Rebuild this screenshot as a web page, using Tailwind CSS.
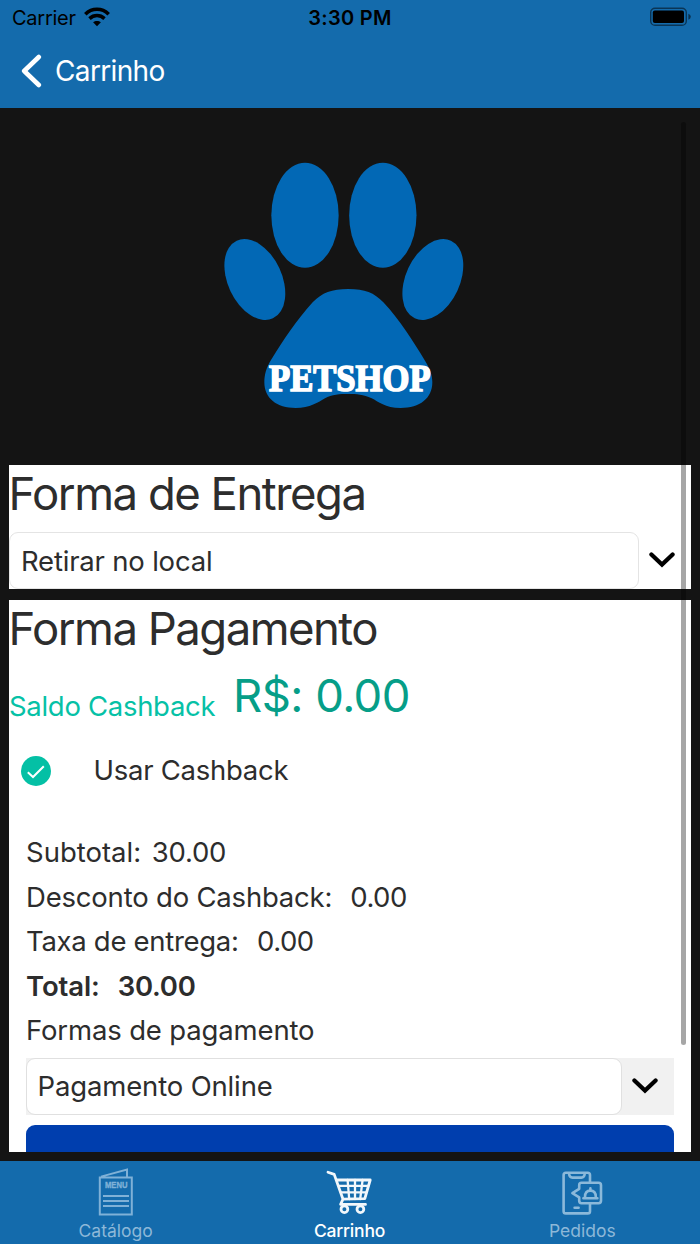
<!DOCTYPE html>
<html lang="pt-BR">
<head>
<meta charset="utf-8">
<title>Carrinho</title>
<script src="https://cdn.jsdelivr.net/npm/@tailwindcss/browser@4"></script>
</head>
<body class="font-['Inter',sans-serif] bg-[#141414] text-[#2d2d2d]">
<div class="relative w-[700px] h-[1244px] flex flex-col overflow-hidden whitespace-nowrap">

  <header class="h-[108px] shrink-0 bg-[#146bac]">
    <div class="h-9 grid grid-cols-3 items-center text-black text-[20px] pl-[12px] pr-[9px]">
      <div class="flex items-center gap-2">
        <span class="tracking-[-0.25px]">Carrier</span>
        <svg class="w-[26px] h-5 -mt-0.5" viewBox="0 0 26 20" fill="none" stroke="#000">
          <path d="M1.3 7.2C8 .6 18 .6 24.7 7.2" stroke-width="3.6"/>
          <path d="M5.5 11.6C9.8 7.6 16.2 7.6 20.5 11.6" stroke-width="3.5"/>
          <path d="M13 19.2L9.1 15.3C11.3 13.5 14.7 13.5 16.9 15.3Z" fill="#000" stroke="none"/>
        </svg>
      </div>
      <span class="text-center font-semibold tracking-[0.3px] -ml-[3px]">3:30 PM</span>
      <svg class="justify-self-end w-[41px] h-5 -mt-0.5" viewBox="0 0 41 20">
        <rect x=".7" y="1.2" width="35.6" height="17" rx="4.3" fill="none" stroke="#000" stroke-opacity=".5" stroke-width="1.4"/>
        <rect x="2.8" y="3.6" width="31.2" height="12.4" rx="2" fill="#000"/>
        <path d="M38.4 6.7Q40.8 7.7 40.8 9.7T38.4 12.7Z" fill="#000" fill-opacity=".55"/>
      </svg>
    </div>
    <div class="h-[70px] flex items-center text-white pl-[21px] gap-[13px]">
      <svg class="w-[21px] h-[34px]" viewBox="0 0 21 34" fill="none" stroke="#fff" stroke-width="4.6" stroke-linecap="round" stroke-linejoin="round"><path d="M17.8 3L3.2 17L17.8 31"/></svg>
      <span class="text-[28px] tracking-[-0.64px]">Carrinho</span>
    </div>
  </header>

  <main class="h-[1044px] shrink-0 px-[9px] overflow-hidden">
    <div class="h-[357px] pt-[42px] pl-[201px]">
      <svg class="w-[270px] h-[270px]" viewBox="0 0 810 810" fill="#0268b5">
        <ellipse cx="285" cy="196" rx="101" ry="157.5"/>
        <ellipse cx="518.5" cy="196" rx="101" ry="157.5"/>
        <ellipse cx="134.5" cy="388.5" rx="81" ry="128.6" transform="rotate(-25 134.5 388.5)"/>
        <ellipse cx="668.5" cy="388.5" rx="81" ry="128.6" transform="rotate(25 668.5 388.5)"/>
        <path d="M415 417C465 417 492 428 520 457C570 510 610 575 645 632C660 657 667 675 667 697C667 745 630 774 572 774C525 774 505 755 485 745C460 733 440 732 415 732C390 732 365 733 345 745C325 757 300 774 257 774C200 774 163 745 163 697C163 675 168 655 183 630C220 570 260 510 308 457C336 428 365 417 415 417Z"/>
        <text x="177" y="724" font-family="Liberation Serif, serif" font-weight="700" font-size="115" fill="#fff" stroke="#fff" stroke-width="5" textLength="485" lengthAdjust="spacingAndGlyphs">PETSHOP</text>
      </svg>
    </div>

    <section class="h-[124px] w-[682px] bg-white">
      <h2 class="h-[67px] pb-[9px] -ml-[0.5px] flex items-center text-[45.5px] tracking-[-1.5px]">Forma de Entrega</h2>
      <div class="flex h-[57px]">
        <div class="w-[630px] border border-[#e4e4e4] rounded-[9px] flex items-center pt-[2px] pl-[11px] text-[27.5px] tracking-[-0.2px]">Retirar no local</div>
        <div class="w-[46px] flex items-center justify-center">
          <svg class="w-[26px] h-4 -mt-px" viewBox="0 0 26 16" fill="none" stroke="#000" stroke-width="4.2" stroke-linecap="round" stroke-linejoin="miter"><path d="M2.4 2.4L13 12.6L23.6 2.4"/></svg>
        </div>
      </div>
    </section>

    <section class="mt-[11px] h-[552px] w-[682px] bg-white overflow-hidden">
      <h2 class="h-[57px] pt-px -ml-[0.5px] flex items-center text-[45.5px] tracking-[-1.53px]">Forma Pagamento</h2>
      <div class="h-[76px] flex items-start">
        <span class="w-[224px] h-[100px] flex items-center text-[27.5px] tracking-[-0.3px] text-[#06c1a6]">Saldo Cashback</span>
        <span class="h-[76px] pt-[2px] flex items-center text-[45.5px] tracking-[-0.55px] text-[#069e88]">R$: 0.00</span>
      </div>
      <div class="h-[74px] flex items-center pl-[12px] gap-[42.5px]">
        <svg class="w-[30px] h-[30px] mt-[2px]" viewBox="0 0 30 30" fill="none"><circle cx="15" cy="15" r="15" fill="#04c0a5"/><path d="M6.8 16.2L12 21L22.8 10.2" stroke="#fff" stroke-width="2"/></svg>
        <span class="pt-px text-[27.5px] tracking-[-0.26px]">Usar Cashback</span>
      </div>
      <div class="mt-[23px] pl-[17px] flex flex-col text-[27.5px] leading-[44.5px]">
        <div class="flex gap-[10.5px]"><span>Subtotal:</span><span class="tracking-[-0.18px]">30.00</span></div>
        <div class="flex gap-[18px]"><span class="tracking-[-0.2px]">Desconto do Cashback:</span><span class="tracking-[-0.5px]">0.00</span></div>
        <div class="flex gap-[18.5px]"><span class="tracking-[-0.3px]">Taxa de entrega:</span><span class="tracking-[-0.5px]">0.00</span></div>
        <div class="flex gap-[18px] font-semibold"><span class="tracking-[-0.12px]">Total:</span><span class="tracking-[-0.25px]">30.00</span></div>
        <div class="tracking-[-0.15px]">Formas de pagamento</div>
      </div>
      <div class="mt-[5px] ml-[17px] w-[648px] h-[57px] flex bg-[#f1f1f1]">
        <div class="w-[596px] bg-white border border-[#e0e0e0] rounded-[9px] flex items-center pt-[2px] pl-[10.5px] text-[27.5px] tracking-[-0.15px]">Pagamento Online</div>
        <div class="w-[46px] flex items-center justify-center">
          <svg class="w-[26px] h-4 -mt-px" viewBox="0 0 26 16" fill="none" stroke="#000" stroke-width="4.2" stroke-linecap="round" stroke-linejoin="miter"><path d="M2.4 2.4L13 12.6L23.6 2.4"/></svg>
        </div>
      </div>
      <div class="mt-[10px] ml-[17px] w-[648px] h-[60px] rounded-[9px] bg-[#003eae]"></div>
    </section>
  </main>

  <nav class="mt-[9px] h-[83px] shrink-0 bg-[#146bac] grid grid-cols-3 text-[17.5px] text-[#8db8d8]">
    <div class="flex flex-col items-center pt-[7px] -ml-[2px]">
      <svg class="w-[36px] h-[50px]" viewBox="0 0 36 50" fill="none" stroke="#7fb1d7" stroke-width="2">
        <path d="M1.8 9.4H33.8V46.6H1.8ZM3 8.6L29 1.6V9.4"/>
        <path d="M5 28H31M5 33H31M5 38H31"/>
        <text x="7" y="20" font-family="Liberation Sans, sans-serif" font-weight="700" font-size="9.5" fill="#7fb1d7" stroke="#7fb1d7" stroke-width=".4" textLength="22.5" lengthAdjust="spacingAndGlyphs">MENU</text>
      </svg>
      <span class="leading-6 mt-[1px]">Catálogo</span>
    </div>
    <div class="flex flex-col items-center pt-[7px] -ml-[1px] text-white">
      <svg class="w-[48px] h-[50px]" viewBox="0 0 48 50" fill="none" stroke="#f2f7fb" stroke-width="2.8" stroke-linecap="round" stroke-linejoin="round">
        <path d="M3 4.2L9.2 6.4L18 31.2M12.2 12H45.2L39.8 30.6L18 31.2L15.6 36.4H40.5"/>
        <path d="M14 17.8H43.4M16.4 24.4H41.4M22.6 12L24.2 31M30 12V31M37.6 12L35.2 31" stroke-width="2.3"/>
        <circle cx="19.4" cy="41.2" r="3.4"/><circle cx="35.4" cy="41.2" r="3.4"/>
      </svg>
      <span class="leading-6 mt-[1px] font-medium tracking-[-0.2px]">Carrinho</span>
    </div>
    <div class="flex flex-col items-center pt-[7px] -ml-[2px]">
      <svg class="w-[44px] h-[50px]" viewBox="0 0 44 50" fill="none" stroke="#8bb9da" stroke-width="2.6" stroke-linejoin="round" stroke-linecap="round">
        <path d="M30 14V7Q30 4.8 27.8 4.8H5.8Q3.6 4.8 3.6 7V43.2Q3.6 45.4 5.8 45.4H27.8Q30 45.4 30 43.2V36"/>
        <path d="M9 5.4Q9.4 9.6 12.4 9.6H21.4Q24.4 9.6 24.8 5.4M14.6 39.8H18.6"/>
        <path d="M21.4 14.8H38.6Q41 14.8 41 17.2V32.8Q41 35.2 38.6 35.2H21.4Q19.2 35.2 19.2 32.8V29.4L12.4 25.2L19.2 20.8V17.2Q19.2 14.8 21.4 14.8Z"/>
        <path d="M23.4 30.2H37.4M25 29Q25 22.6 30.4 22.6T35.8 29M30.4 22V20.4"/>
      </svg>
      <span class="leading-6 mt-[1px]">Pedidos</span>
    </div>
  </nav>

  <div class="absolute left-[681px] top-[122px] w-[5px] h-[923px] rounded-full bg-black/35"></div>
</div>
</body>
</html>
